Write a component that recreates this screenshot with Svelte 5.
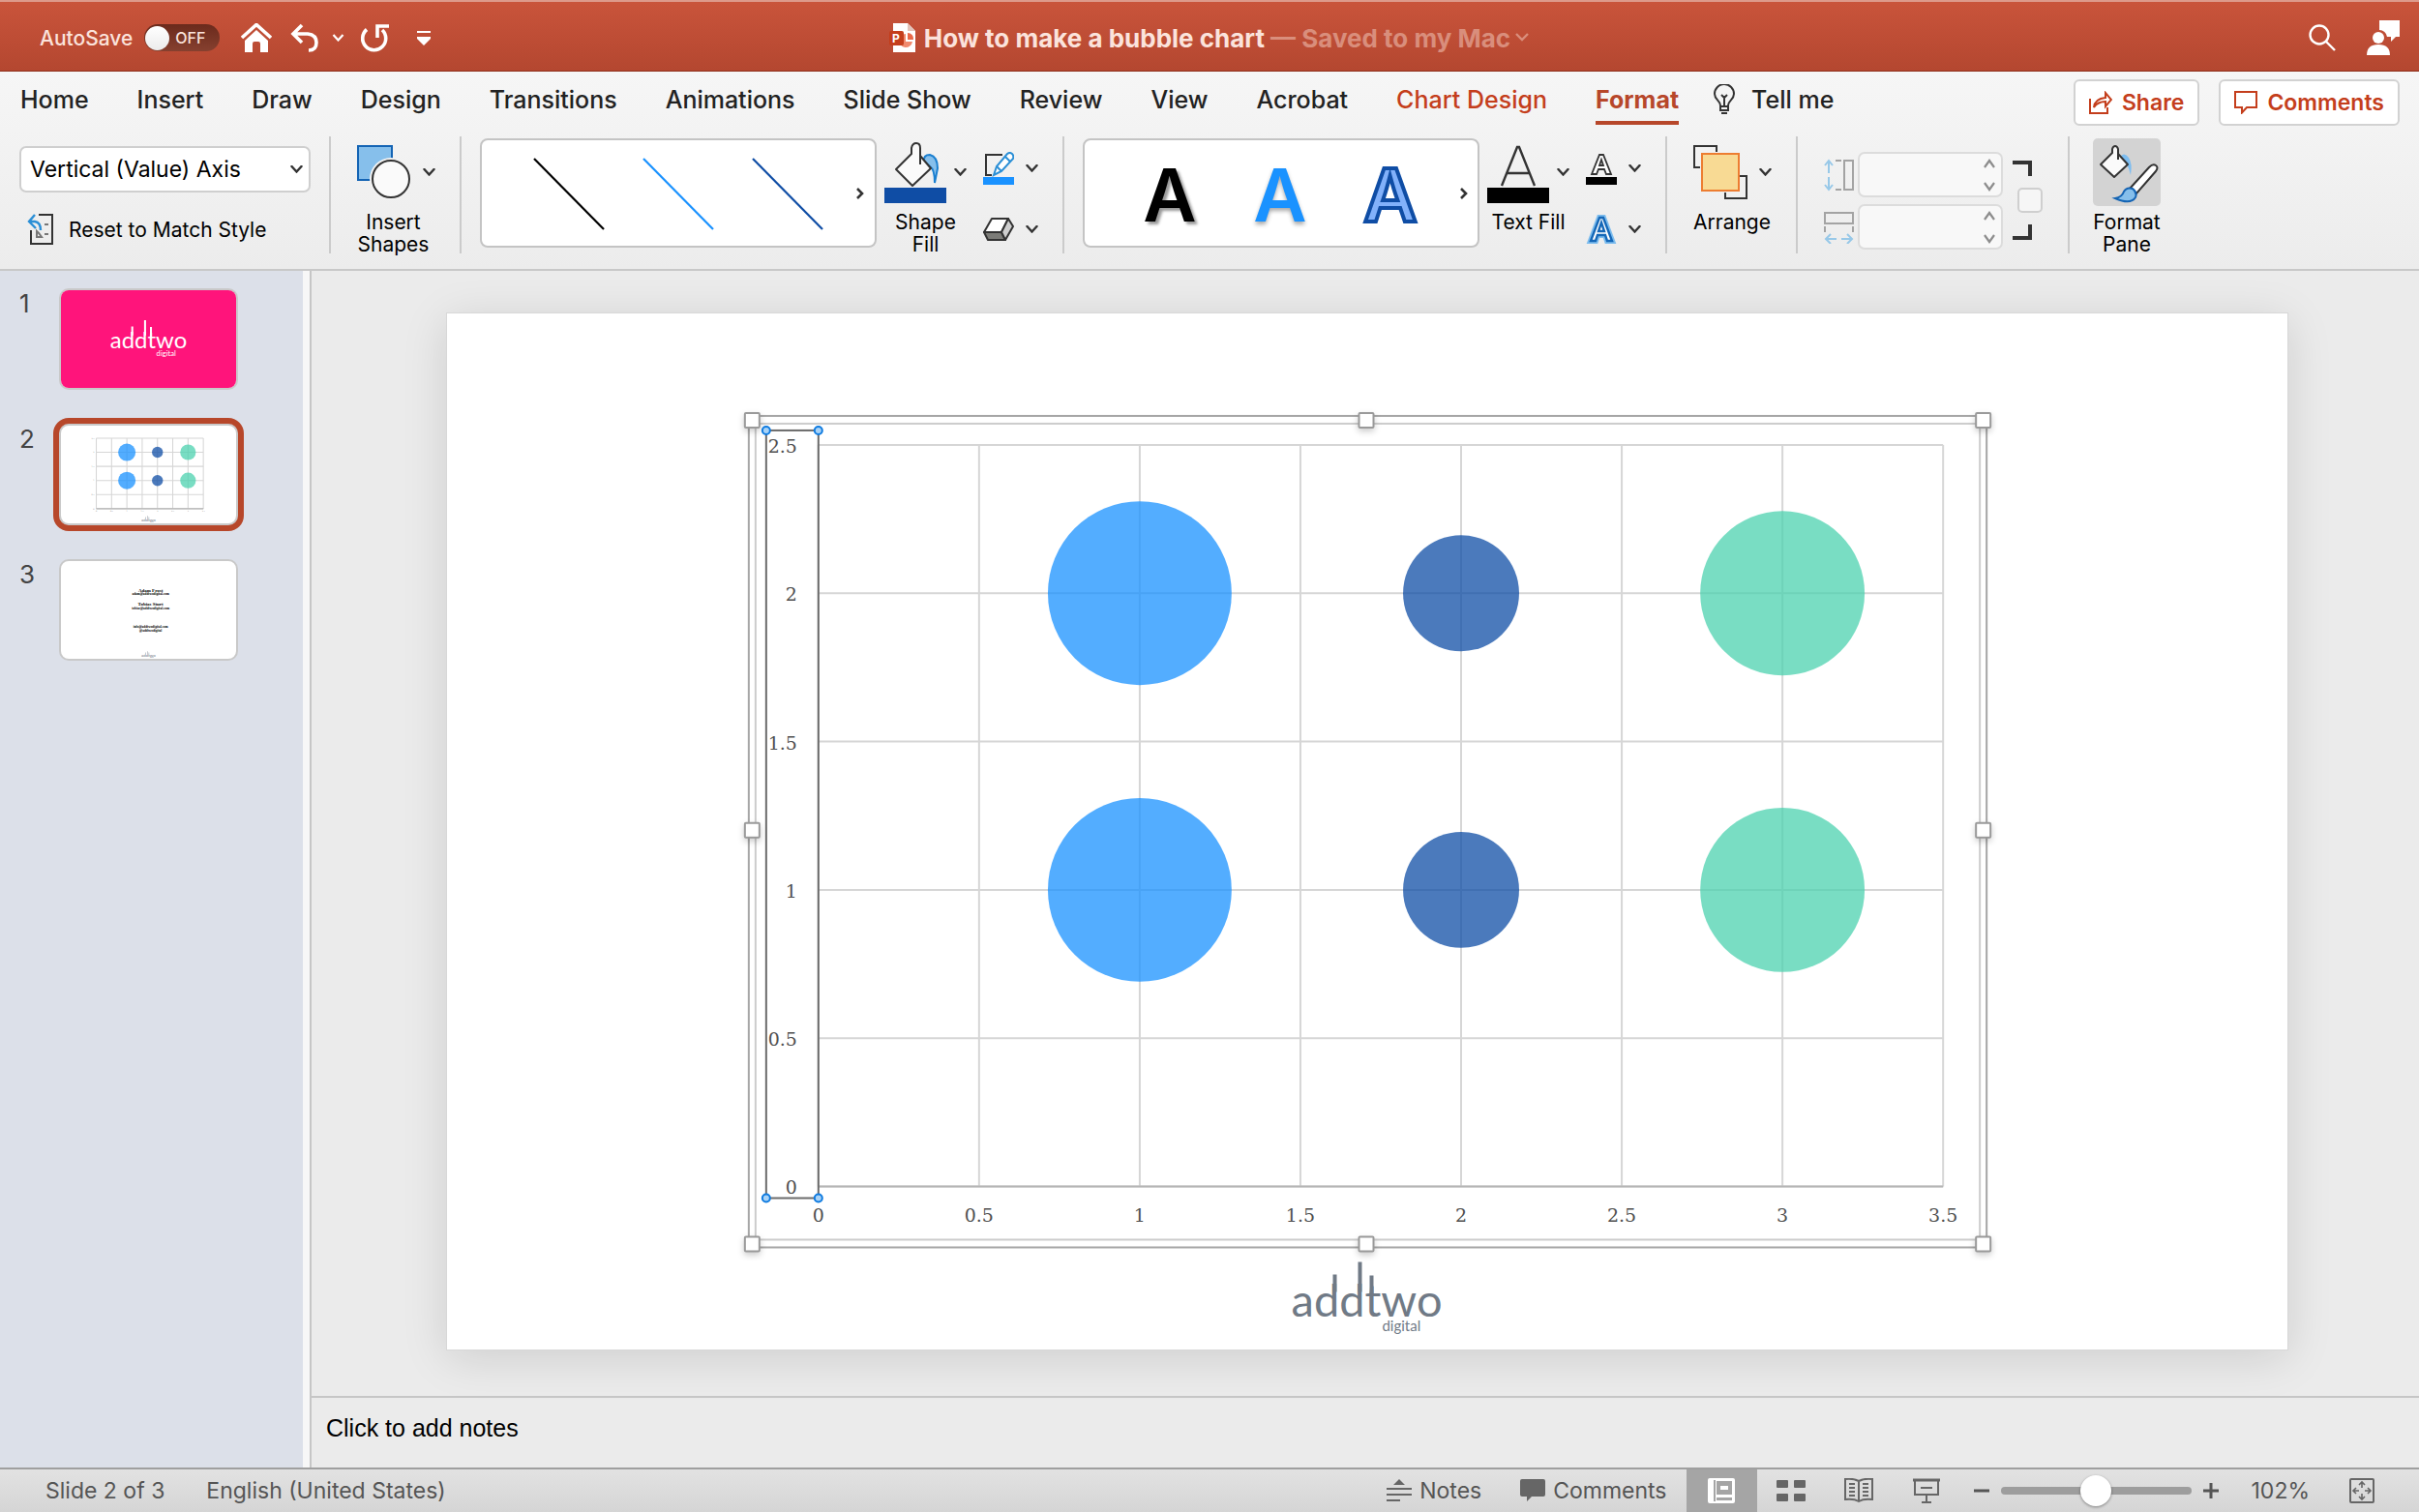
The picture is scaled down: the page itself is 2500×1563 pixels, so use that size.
<script>
  const tabs = ['Home', 'Insert', 'Draw', 'Design', 'Transitions', 'Animations', 'Slide Show', 'Review', 'View', 'Acrobat', 'Chart Design', 'Format'];
  const contextual = ['Chart Design', 'Format'];
  let activeTab = $state('Format');
  let selected = $state(2);
  let zoom = $state(50);
  let autosave = $state(false);

  const lineStyles = ['#000000', '#1a92ff', '#0f4da5'];
  const textStyles = ['plain', 'bright', 'outlined'];

  // plot area inside the 1903 x 1072 slide
  const left = 384, right = 1547, top = 136, bottom = 903;
  const px = (v) => left + (v / 3.5) * (right - left);
  const py = (v) => bottom - (v / 2.5) * (bottom - top);
  const xTicks = [0, 0.5, 1, 1.5, 2, 2.5, 3, 3.5];
  const yTicks = [0, 0.5, 1, 1.5, 2, 2.5];
  const bubbles = [1, 2].flatMap((y) => [
    { x: 1, y, r: 95, fill: '#1a92ff' },
    { x: 2, y, r: 60, fill: '#0f4da5' },
    { x: 3, y, r: 85, fill: '#4cd2af' },
  ]);
  const handles = [[315, 110], [950, 110], [1588, 110], [315, 534], [1588, 534], [315, 962], [950, 962], [1588, 962]];
  const axisDots = [[330, 121], [384, 121], [330, 915], [384, 915]];
  const contacts = [
    { y: 333, size: 52, text: 'Adam Frost' },
    { y: 370, size: 36, text: 'adam@addtwodigital.com' },
    { y: 481, size: 52, text: 'Tobias Sturt' },
    { y: 523, size: 36, text: 'tobias@addtwodigital.com' },
    { y: 728, size: 36, text: 'info@addtwodigital.com' },
    { y: 766, size: 36, text: '@addtwodigital' },
  ];
</script>

{#snippet chevron()}
  <svg class="chev" width="13" height="8" viewBox="0 0 13 8"><path d="M1.5 1l5 5.5 5-5.5" fill="none" stroke="currentColor" stroke-width="2.4" stroke-linecap="round" /></svg>
{/snippet}

{#snippet spinner()}
  <svg class="spin" width="14" height="34" viewBox="0 0 14 34" fill="none" stroke="#8d8d8d" stroke-width="2.2"><path d="M2 9l5-7 5 7M2 25l5 7 5-7" /></svg>
{/snippet}

{#snippet logo(x, y, k, color)}
  <g transform="translate({x} {y}) scale({k})" fill={color}>
    <text class="brand" x="0" y="0" font-size="47">addtwo</text>
    <text class="brand" x="94" y="15" font-size="15">digital</text>
    <path d="M43 -44h4v18h-4zM69 -57h4v31h-4zM81 -43h4v20h-4z" />
  </g>
{/snippet}

{#snippet chart(line)}
  <g stroke="#d6d6d6" stroke-width={line}>
    {#each xTicks as t (t)}<line x1={px(t)} x2={px(t)} y1={top} y2={bottom} />{/each}
    {#each yTicks as t (t)}<line x1={left} x2={right} y1={py(t)} y2={py(t)} />{/each}
  </g>
  <line x1={left} x2={right} y1={bottom} y2={bottom} stroke="#b5b5b5" stroke-width={line} />
  {#each bubbles as b (`${b.x}-${b.y}`)}
    <circle cx={px(b.x)} cy={py(b.y)} r={b.r} fill={b.fill} fill-opacity="0.75" />
  {/each}
  <g class="ticks">
    {#each yTicks as t (t)}<text x="362" y={py(t) + 8} text-anchor="end">{t}</text>{/each}
    {#each xTicks as t (t)}<text x={px(t)} y="940" text-anchor="middle">{t}</text>{/each}
  </g>
{/snippet}

<div class="app">
  <header class="titlebar">
    <div class="quick">
      <label class="autosave">AutoSave
        <input type="checkbox" class="hidden" bind:checked={autosave} />
        <span class="toggle" class:on={autosave}><i></i>{autosave ? 'ON' : 'OFF'}</span>
      </label>
      <button aria-label="Home" class="home">
        <svg width="32" height="30" viewBox="0 0 32 30"><path d="M1 15L16 1.500l15 13.500" fill="none" stroke="#fff" stroke-width="3.600" /><path d="M4 18L16 7l12 11v12h-8v-9q0-2-2-2h-4q-2 0-2 2v9H4z" fill="#fff" /></svg>
      </button>
      <button aria-label="Undo" class="undo">
        <svg width="30" height="30" viewBox="0 0 30 30" fill="none" stroke="#fff" stroke-width="3.600"><path d="M12 2L3 11l9 9M3 11h15q9 1 9 9 0 8-8 8" /></svg>
      </button>
      <button aria-label="Undo history" class="history">
        <svg width="13" height="8" viewBox="0 0 13 8"><path d="M1.500 1l5 5.500 5-5.500" fill="none" stroke="#fff" stroke-width="2.200" /></svg>
      </button>
      <button aria-label="Repeat" class="redo">
        <svg width="30" height="30" viewBox="0 0 30 30" fill="none" stroke="#fff" stroke-width="3.600"><path d="M7 6.500A12 12 0 1 0 23 7M18 15V3h12" /></svg>
      </button>
      <button aria-label="Customize toolbar" class="custom">
        <svg width="16" height="16" viewBox="0 0 16 16" fill="#fff"><path d="M1 1h14v2H1zM1 7h14v2l-7 7-7-7z" /></svg>
      </button>
    </div>
    <div class="doc">
      <svg width="28" height="30" viewBox="0 0 28 30"><path d="M4 0h15l8 8v22H4z" fill="#fff" /><path d="M19 0l8 8h-8z" fill="#e2c3ba" /><path d="M17 11a7 7 0 1 0 7 8h-7z" fill="#f08a6e" /><path d="M19 10v7h6a6 6 0 0 0-6-7z" fill="#e9694a" /><rect x="0" y="8" width="15" height="15" rx="2" fill="#c43e1c" /><text x="7" y="20" text-anchor="middle" class="ppt">P</text></svg>
      <h1>How to make a bubble chart <span>— Saved to my Mac</span></h1>
      <svg width="16" height="10" viewBox="0 0 16 10"><path d="M2 1l6 6 6-6" fill="none" stroke="#d98e7c" stroke-width="2.400" /></svg>
    </div>
    <div class="right">
      <button aria-label="Search">
        <svg width="28" height="28" viewBox="0 0 28 28" fill="none" stroke="#fff" stroke-width="2.400"><circle cx="11" cy="11" r="9.500" /><path d="M18 18l9 9" /></svg>
      </button>
      <button aria-label="Account">
        <svg width="36" height="36" viewBox="0 0 36 36" fill="#fff"><path d="M13 0h21v17h-4l-5 5v-5h-4a8 8 0 0 0-8-7z" /><circle cx="12" cy="18" r="6" /><path d="M0 36q0-11 12-11t12 11z" /></svg>
      </button>
    </div>
  </header>

  <div class="ribbon">
    <nav class="tabs">
      {#each tabs as tab (tab)}
        <button class:accent={contextual.includes(tab)} class:active={tab === activeTab} onclick={() => (activeTab = tab)}>{tab}</button>
      {/each}
      <button class="tell">
        <svg width="22" height="32" viewBox="0 0 22 32" fill="none" stroke="#333" stroke-width="2"><path d="M7 22c0-5-6-6-6-12a10 10 0 0 1 20 0c0 6-6 7-6 12v5H7zM7 23h8M8 30h6M11 22v-8l-3-3M11 14l3-3" /></svg>
        Tell me
      </button>
      <div class="collab">
        <button>
          <svg width="24" height="24" viewBox="0 0 24 24" fill="none" stroke="#c43e1c" stroke-width="2"><path d="M1 8v15h18v-6M5 17q1-9 12-10V2l6 7-6 7v-5q-8 0-12 6z" /></svg>
          Share
        </button>
        <button>
          <svg width="24" height="24" viewBox="0 0 24 24" fill="none" stroke="#c43e1c" stroke-width="2"><path d="M1 1h22v16H13l-5 5.500V17H1z" /></svg>
          Comments
        </button>
      </div>
    </nav>

    <div class="tools">
      <div class="selection">
        <div class="picker">
          <select aria-label="Chart element"><option>Vertical (Value) Axis</option></select>
          {@render chevron()}
        </div>
        <button class="reset">
          <svg width="28" height="32" viewBox="0 0 28 32" fill="none"><path d="M12 1h14v30H4V17" stroke="#333" stroke-width="2" /><path d="M8 1L2 8l7 7M2 8h6q6 1 6 9" stroke="#2b8fd6" stroke-width="2.400" /><path d="M18 11h4M18 21h4M10 18v6h5l-3-4z" stroke="#777" stroke-width="2" /></svg>
          Reset to Match Style
        </button>
      </div>
      <span class="sep"></span>

      <button class="big shapes">
        <span class="face">
          <svg width="56" height="56" viewBox="0 0 56 56"><rect x="1" y="1" width="35" height="35" fill="#86bfeb" stroke="#1464b4" stroke-width="2" /><circle cx="35" cy="35" r="22" fill="#f2f2f2" /><circle cx="35" cy="35" r="19" fill="#fafafa" stroke="#333" stroke-width="2" /></svg>
          {@render chevron()}
        </span>
        <span class="caption">Insert<br />Shapes</span>
      </button>
      <span class="sep"></span>

      <div class="gallery">
        {#each lineStyles as c (c)}
          <button aria-label="Line style"><svg width="76" height="76" viewBox="0 0 76 76"><path d="M2 2l72 73" stroke={c} stroke-width="2.200" /></svg></button>
        {/each}
        <button aria-label="More styles" class="more"><svg width="10" height="14" viewBox="0 0 10 14"><path d="M2 2l5 5-5 5" fill="none" stroke="#333" stroke-width="2.600" /></svg></button>
      </div>

      <button class="big fill">
        <span class="face">
          <svg width="64" height="64" viewBox="0 0 64 64"><path d="M41 21q-1-7 6-7 8 2 8 14l-3 15q0-14-5-17z" fill="#86bfeb" stroke="#1a7fd0" stroke-width="2" /><path d="M12 29l16-16V7q1-5 5-5t4 5v8l11 13-19 18z" fill="#fafafa" stroke="#333" stroke-width="2" stroke-linejoin="round" /><path d="M37 14v10" stroke="#333" stroke-width="2" /><rect y="48" width="64" height="16" fill="#0f4da5" /></svg>
          {@render chevron()}
        </span>
        Shape<br />Fill
      </button>
      <div class="pair">
        <button aria-label="Shape outline">
          <svg width="32" height="34" viewBox="0 0 32 34"><path d="M20 3H3v21h6" fill="none" stroke="#333" stroke-width="2" /><path d="M11 24l3-9L25 2q3-2 5 0t1 5L19 20z" fill="#fff" stroke="#2b8fd6" stroke-width="2" /><path d="M14 15l5 5M23 5l5 5" stroke="#2b8fd6" stroke-width="2" /><rect y="26" width="32" height="8" fill="#1a92ff" /></svg>
          {@render chevron()}
        </button>
        <button aria-label="Shape effects">
          <svg width="32" height="26" viewBox="0 0 32 26" stroke="#333" stroke-width="2" stroke-linejoin="round"><path d="M9 2h17l-7 14H1z" fill="#fff" /><path d="M1 16h18l4 8H5z" fill="#7c7c78" /><path d="M26 2l5 8-8 14-4-8z" fill="#cfcfcf" /></svg>
          {@render chevron()}
        </button>
      </div>
      <span class="sep"></span>

      <div class="gallery second">
        {#each textStyles as s (s)}<button class="glyph {s}">A</button>{/each}
        <button aria-label="More text styles" class="more"><svg width="10" height="14" viewBox="0 0 10 14"><path d="M2 2l5 5-5 5" fill="none" stroke="#333" stroke-width="2.600" /></svg></button>
      </div>

      <button class="big fill">
        <span class="face">
          <svg width="64" height="64" viewBox="0 0 64 64"><path d="M15 46L31 6h2l16 40M21 33h22" fill="none" stroke="#333" stroke-width="2.400" /><rect y="48" width="64" height="16" /></svg>
          {@render chevron()}
        </span>
        Text Fill
      </button>
      <div class="pair">
        <button aria-label="Text outline">
          <svg width="32" height="34" viewBox="0 0 32 34"><path d="M6 23L14 3h4l8 20h-5l-2-5h-6l-2 5zM14 14h4l-2-6z" fill="#fff" stroke="#333" stroke-width="1.800" /><rect y="26" width="32" height="8" /></svg>
          {@render chevron()}
        </button>
        <button aria-label="Text effects">
          <svg width="32" height="32" viewBox="0 0 32 32" fill="#fff"><path d="M5 28L14 4h4l9 24h-5l-2-6h-8l-2 6z" stroke="#7dbdee" stroke-width="6" /><path d="M5 28L14 4h4l9 24h-5l-2-6h-8l-2 6zM13 18h6l-3-9z" stroke="#1568b8" stroke-width="2.400" /></svg>
          {@render chevron()}
        </button>
      </div>
      <span class="sep"></span>

      <button class="big arrange">
        <span class="face">
          <svg width="56" height="56" viewBox="0 0 56 56" fill="none"><path d="M7 23H1V1h23v6M48 32h7v23H33v-6" stroke="#333" stroke-width="2" /><rect x="9" y="9" width="38" height="38" fill="#f8da94" stroke="#ed7d31" stroke-width="2" /></svg>
          {@render chevron()}
        </span>
        <span class="caption">Arrange</span>
      </button>
      <span class="sep"></span>

      <div class="size">
        <label class="dim">
          <svg width="31" height="34" viewBox="0 0 31 34" fill="none" stroke-width="2"><path d="M5 15V2M1 7l4-5 4 5M5 19v13M1 27l4 5 4-5" stroke="#97c8e8" /><path d="M12 2h6M12 32h6M21 2h9v30h-9z" stroke="#a3a3a3" /></svg>
          <input type="text" aria-label="Shape height" />
          {@render spinner()}
        </label>
        <label class="dim">
          <svg width="31" height="34" viewBox="0 0 31 34" fill="none" stroke-width="2"><path d="M13 29H2M7 24l-5 5 5 5M18 29h11M24 24l5 5-5 5" stroke="#97c8e8" /><path d="M1 2h29v11H1zM1 16v6M30 16v6" stroke="#a3a3a3" /></svg>
          <input type="text" aria-label="Shape width" />
          {@render spinner()}
        </label>
      </div>
      <div class="lock">
        <svg width="20" height="16" viewBox="0 0 20 16"><path d="M0 2h18v14" fill="none" stroke="#333" stroke-width="4" /></svg>
        <input type="checkbox" aria-label="Lock aspect ratio" />
        <svg width="20" height="16" viewBox="0 0 20 16"><path d="M0 14h18V0" fill="none" stroke="#333" stroke-width="4" /></svg>
      </div>
      <span class="sep"></span>

      <button class="big pane">
        <span class="face">
          <svg width="70" height="70" viewBox="0 0 70 70"><path d="M29 18q4-4 8 2 4 6 2 18-3-13-8-14z" fill="#7dbdf0" /><path d="M8 27l12-12V11q1-3 3-3t3 3v5l10 11-14 13z" fill="#fafafa" stroke="#333" stroke-width="2" stroke-linejoin="round" /><path d="M26 14v8" stroke="#333" stroke-width="2" /><path d="M38 52l20-22q4-4 7-2t0 6L45 57z" fill="#fff" stroke="#333" stroke-width="2" /><path d="M23 62q7-1 9-7 3-5 9-3 5 4 3 9-5 8-21 1z" fill="#86bfeb" stroke="#1464b4" stroke-width="2" /></svg>
        </span>
        Format<br />Pane
      </button>
    </div>
  </div>

  <div class="body">
    <aside>
      {#each [1, 2, 3] as n (n)}
        <button class="thumb" class:current={n === selected} onclick={() => (selected = n)}>
          <span class="num">{n}</span>
          <span class="frame">
            <svg viewBox="0 0 1903 1072">
              {#if n === 1}
                <rect width="1903" height="1072" fill="#ff147b" />
                {@render logo(534, 630, 5.35, '#fff')}
              {:else if n === 2}
                {@render chart(11)}
                {@render logo(873, 1037, 1, '#707a86')}
              {:else}
                {#each contacts as c (c.text)}
                  <text class="contact" x="974" y={c.y} font-size={c.size} text-anchor="middle">{c.text}</text>
                {/each}
                {@render logo(873, 1037, 1, '#707a86')}
              {/if}
            </svg>
          </span>
        </button>
      {/each}
    </aside>

    <main>
      <div class="stage">
        <svg class="slide" viewBox="0 0 1903 1072">
          {@render chart(2)}
          {@render logo(873, 1038, 1, '#707a86')}
          <g fill="none" stroke-width="2">
            <rect x="312" y="106" width="1280" height="860" stroke="#a6a6a6" />
            <rect x="319" y="114" width="1266" height="844" stroke="#cccccc" />
            <rect x="330" y="121" width="54" height="794" stroke="#6b6b6b" />
          </g>
          {#each handles as [x, y] (`${x}-${y}`)}
            <rect class="handle" x={x - 7} y={y - 7} width="15" height="15" rx="1" />
          {/each}
          {#each axisDots as [x, y] (`${x}-${y}`)}
            <circle cx={x} cy={y} r="4" fill="#a9d3f7" stroke="#0f7be0" stroke-width="2" />
          {/each}
        </svg>
      </div>
      <div class="notes">Click to add notes</div>
    </main>
  </div>

  <footer>
    <span class="where">Slide 2 of 3</span>
    <button class="lang">English (United States)</button>
    <div class="views">
      <button class="notes-btn">
        <svg width="26" height="24" viewBox="0 0 26 24" fill="#666"><path d="M13 0l6 6H7zM0 9h26v2H0zM0 15h26v2H0zM0 21h14v2H0z" /></svg>
        Notes
      </button>
      <button class="comments-btn">
        <svg width="26" height="24" viewBox="0 0 26 24" fill="#666"><path d="M2 0h22q2 0 2 2v14q0 2-2 2H12l-5 5v-5H2q-2 0-2-2V2q0-2 2-2z" /></svg>
        Comments
      </button>
      <button class="view on" aria-label="Normal view">
        <svg width="28" height="26" viewBox="0 0 28 26"><rect width="28" height="26" rx="2" fill="#fff" /><path d="M7 2v22" stroke="#a5a5a5" stroke-width="2" /><path d="M9 3h16v14H9zM9 20h16v3H9z" fill="#a5a5a5" /><path d="M13 8h8v4h-8z" fill="#fff" /></svg>
      </button>
      <button class="view" aria-label="Slide sorter">
        <svg width="30" height="24" viewBox="0 0 30 24" fill="#666"><rect y="1" width="12" height="8" rx="1" /><rect x="18" y="1" width="12" height="8" rx="1" /><rect y="15" width="12" height="8" rx="1" /><rect x="18" y="15" width="12" height="8" rx="1" /></svg>
      </button>
      <button class="view" aria-label="Reading view">
        <svg width="30" height="26" viewBox="0 0 30 26" fill="none" stroke="#666" stroke-width="2"><path d="M15 3Q9 0 1 1v21q9-1 14 2 5-3 14-2V1q-8-1-14 2zv21M5 6h6M5 10h6M5 14h6M5 18h6M19 6h6M19 10h6M19 14h6M19 18h6" /></svg>
      </button>
      <button class="view" aria-label="Slide show">
        <svg width="30" height="26" viewBox="0 0 30 26" fill="none" stroke="#666" stroke-width="2"><path d="M3 3v14h24V3M15 17v8M10 25h10M9 10h12" /><path d="M1 2h28" stroke-width="3" /></svg>
      </button>
      <button aria-label="Zoom out" class="step"><svg width="16" height="16" viewBox="0 0 16 16"><path d="M0 8h16" stroke="#555" stroke-width="3" /></svg></button>
      <input type="range" aria-label="Zoom" bind:value={zoom} />
      <button aria-label="Zoom in" class="step"><svg width="16" height="16" viewBox="0 0 16 16"><path d="M0 8h16M8 0v16" stroke="#555" stroke-width="3" /></svg></button>
      <button class="pct">102%</button>
      <button aria-label="Fit to window">
        <svg width="26" height="26" viewBox="0 0 26 26" fill="none" stroke="#666" stroke-width="2"><rect x="1" y="1" width="24" height="24" rx="1" /><path d="M13 4v6M10 7l3-3 3 3M13 22v-6M10 19l3 3 3-3M4 13h6M7 10l-3 3 3 3M22 13h-6M19 10l3 3-3 3" stroke-width="1.600" /></svg>
      </button>
    </div>
  </footer>
</div>

<style>
  :global(body) { margin: 0; }
  * { box-sizing: border-box; }
  .app { min-height: 100vh; display: flex; flex-direction: column; font-family: Inter, "Liberation Sans", sans-serif; color: #222; background: #ebebeb; }
  button { font: inherit; color: inherit; background: none; border: none; padding: 0; margin: 0; }
  svg { display: block; flex: none; }

  .titlebar { height: 74px; padding-top: 3px; display: grid; grid-template-columns: 1fr auto 1fr; align-items: center; color: #fbe3dc;
    background: linear-gradient(#c9543b, #b44730); border-top: 2px solid #dd9a8b; border-bottom: 1px solid #8f2f1b; }
  .quick { display: flex; align-items: center; padding-left: 41px; }
  .autosave { display: flex; align-items: center; gap: 12px; font-size: 21px; font-weight: 500; }
  .hidden { position: absolute; opacity: 0; }
  .toggle { display: flex; align-items: center; gap: 6px; width: 78px; height: 28px; border-radius: 14px; font-size: 16px;
    background: linear-gradient(#6b2a1c, #86402f); padding: 1px; }
  .toggle.on { flex-direction: row-reverse; }
  .toggle i { width: 25px; height: 25px; border-radius: 50%; background: linear-gradient(#fff, #ececec); }
  .home { margin-left: 22px; }
  .undo { margin-left: 19px; }
  .history { margin-left: 13px; }
  .redo { margin-left: 16px; }
  .custom { margin-left: 28px; }
  .doc { display: flex; align-items: center; gap: 8px; }
  h1 { margin: 0; font-size: 26px; font-weight: 700; }
  h1 span { color: #d98e7c; }
  .doc > svg:last-child { margin-left: -4px; }
  .ppt { font-size: 12px; font-weight: 700; fill: #fff; }
  .right { display: flex; align-items: center; justify-content: flex-end; gap: 32px; padding-right: 18px; }

  .ribbon { background: linear-gradient(#f6f6f6, #ececec); border-bottom: 2px solid #c8c8c8; height: 206px; }
  .tabs { display: flex; gap: 50px; padding: 8px 20px 0 21px; height: 67px; font-size: 25px; font-weight: 500; }
  .tabs > button { height: 47px; padding-bottom: 2px; border-bottom: 4px solid transparent; white-space: nowrap; }
  .tabs > .accent { color: #c43e1c; }
  .tabs > .active { font-weight: 700; color: #b7472a; border-color: #b7472a; }
  .tabs > .tell { display: flex; align-items: center; gap: 17px; margin-left: -14px; }
  .collab { margin-left: auto; display: flex; gap: 20px; }
  .collab button { display: flex; align-items: center; gap: 10px; height: 48px; padding: 0 14px; border: 2px solid #d2d2d2;
    border-radius: 6px; background: #fff; color: #c43e1c; font-size: 23px; font-weight: 600; }

  .tools { display: flex; align-items: flex-start; padding-left: 20px; font-size: 21px; line-height: 23px; color: #000; }
  .sep { flex: none; width: 2px; height: 121px; background: #cbcbcb; }
  .chev { color: #333; }
  .selection { width: 301px; margin-right: 19px; padding-top: 10px; }
  .picker { position: relative; }
  .picker select { width: 100%; height: 48px; padding: 0 9px; appearance: none; border: 2px solid #cfcfcf; border-radius: 7px;
    background: #fff; font: 23px Inter, "Liberation Sans", sans-serif; color: #000; }
  .picker .chev { position: absolute; right: 8px; top: 20px; }
  .reset { display: flex; align-items: center; gap: 15px; margin: 22px 0 0 8px; white-space: nowrap; }
  .big { flex: none; text-align: center; }
  .face { display: flex; align-items: center; justify-content: space-between; height: 74px; margin-bottom: 3px; }
  .caption { display: block; margin-right: 6px; white-space: nowrap; }
  .shapes, .arrange { width: 81px; margin: 0 25px 0 27px; }
  .fill { width: 85px; margin: 0 17px 0 8px; white-space: nowrap; }
  .gallery { flex: none; display: flex; align-items: center; width: 410px; height: 113px; margin: 2px 0 0 19px; padding-left: 52px;
    border: 2px solid #c4c4c4; border-radius: 8px; background: #fff; }
  .gallery button { width: 76px; margin-right: 37px; }
  .gallery .more { width: 10px; margin: 0 0 0 -5px; }
  .gallery .glyph { font-size: 76px; font-weight: 600; line-height: 80px; text-align: center; padding-top: 2px; }
  .second { padding-left: 50px; }
  .second .glyph { margin-right: 38px; }
  .plain { color: #000; text-shadow: 3px 3px 3px #999; }
  .bright { color: #1a92ff; text-shadow: 0 3px 4px #aaa; }
  .outlined { color: #82b1fa; -webkit-text-stroke: 4px #0f4da5; }
  .pair { flex: none; width: 57px; margin-right: 25px; padding-top: 16px; display: grid; gap: 29px; }
  .pair button { display: flex; align-items: center; justify-content: space-between; height: 34px; }
  .size { flex: none; display: grid; gap: 7px; margin-left: 27px; padding-top: 16px; }
  .dim { position: relative; display: flex; align-items: center; gap: 4px; }
  .dim input { width: 150px; height: 47px; border: 2px solid #dcdcdc; border-radius: 7px; background: #f8f8f8; font-size: 20px; padding: 0 28px 0 8px; }
  .spin { position: absolute; right: 7px; top: 7px; }
  .lock { flex: none; display: grid; gap: 12px; width: 31px; margin: 25px 26px 0 10px; }
  .lock input { appearance: none; margin: 0 0 0 5px; width: 26px; height: 26px; border: 2px solid #cfcfcf; border-radius: 5px; background: #f6f6f6; }
  .pane { width: 70px; margin-left: 24px; }
  .pane .face svg { background: #d3d3d3; border-radius: 5px; }

  .body { flex: 1; display: flex; }
  aside { flex: none; width: 322px; padding: 18px 0 0 20px; background: #dce0e9; border-right: 2px solid #c6c6c6; box-shadow: inset -7px 0 #f7f7f7; }
  .thumb { display: flex; gap: 20px; height: 140px; text-align: left; }
  .num { width: 21px; padding-top: 2px; font-size: 26px; line-height: 28px; color: #444; }
  .frame { width: 185px; height: 105px; border: 2px solid #c9c9c9; border-radius: 10px; overflow: hidden; background: #fff; }
  .frame svg { width: 100%; }
  .current .frame { outline: 6px solid #b7472a; border-radius: 10px; }

  main { flex: 1; display: flex; flex-direction: column; min-width: 0; }
  .stage { flex: 1; padding: 44px 136px 47px 140px; }
  .slide { width: 100%; background: #fff; outline: 1px solid #d8d8d8; box-shadow: 0 8px 44px rgba(0, 0, 0, 0.13); }
  .ticks { font: 19px "DejaVu Serif", serif; fill: #505050; }
  .brand { font-family: Lato, sans-serif; }
  .contact { font-family: "Liberation Serif", serif; font-weight: 700; }
  .handle { fill: #fff; stroke: #9a9a9a; stroke-width: 2; filter: drop-shadow(0 3px 3px rgba(0, 0, 0, 0.2)); }
  .notes { height: 74px; padding: 16px 15px; border-top: 2px solid #c6c6c6; color: #000; font: 25px/30px "Liberation Sans", Arial, sans-serif; }

  footer { height: 46px; display: flex; align-items: center; padding-left: 47px; background: linear-gradient(#e2e2e2, #d5d5d5);
    border-top: 2px solid #9f9f9f; font-size: 23px; color: #555; }
  .lang { margin-left: 43px; }
  .views { margin-left: auto; display: flex; align-items: center; height: 100%; padding-right: 46px; }
  .notes-btn, .comments-btn { display: flex; align-items: center; gap: 8px; }
  .comments-btn { margin: 0 20px 0 40px; }
  .view { width: 70px; height: 100%; display: grid; place-items: center; }
  .view.on { width: 73px; background: #a5a5a5; }
  .step { margin: 0 12px; }
  .view + .step { margin-left: 14px; }
  input[type='range'] { appearance: none; width: 197px; height: 34px; margin: 0; background: none; }
  input[type='range']::-webkit-slider-runnable-track { height: 8px; border-radius: 4px; background: #9d9d9d; }
  input[type='range']::-webkit-slider-thumb { appearance: none; width: 32px; height: 32px; margin-top: -12px; border-radius: 50%;
    background: #fff; box-shadow: 0 1px 3px rgba(0, 0, 0, 0.4); }
  .pct { margin: 0 41px 0 22px; }
</style>
